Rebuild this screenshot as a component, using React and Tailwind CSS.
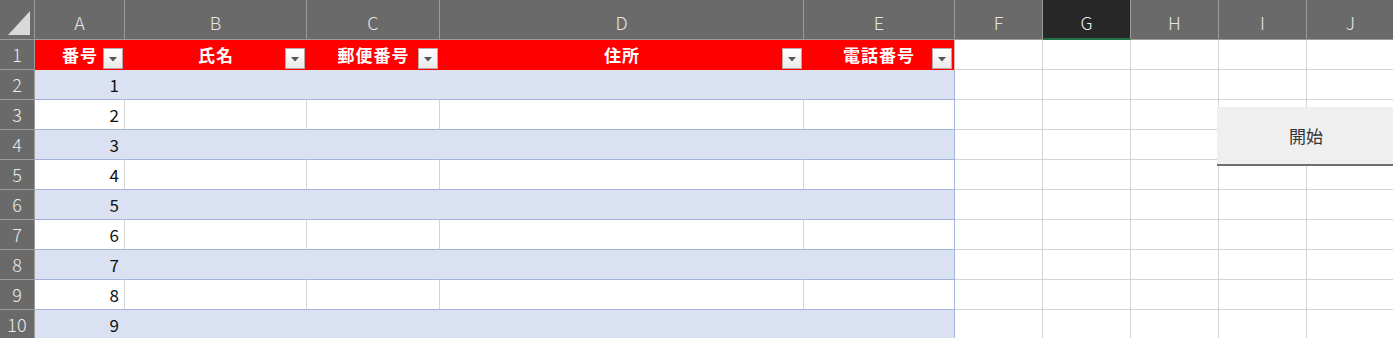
import React from "react";

const cols = [
  { l: "A", w: "w-[90px]" },
  { l: "B", w: "w-[182px]" },
  { l: "C", w: "w-[133px]" },
  { l: "D", w: "w-[364px]" },
  { l: "E", w: "w-[151px]" },
  { l: "F", w: "w-[88px]" },
  { l: "G", w: "w-[88px]" },
  { l: "H", w: "w-[88px]" },
  { l: "I", w: "w-[88px]" },
  { l: "J", w: "w-[88px]" },
];

const headers = ["番号", "氏名", "郵便番号", "住所", "電話番号"];

function FilterBtn() {
  return (
    <div className="absolute right-[2px] bottom-[1px] w-[20px] h-[21px] border border-[#b9a7a7] bg-gradient-to-b from-white to-[#e9e9e9] flex items-center justify-center">
      <svg width="8" height="5" viewBox="0 0 8 5" className="mt-[2px]">
        <path d="M0 0 L8 0 L4 4.5 Z" fill="#555" />
      </svg>
    </div>
  );
}

function RowHeader({ n }) {
  return (
    <div className="w-[35px] shrink-0 h-full bg-[#6a6a6a] border-r border-b border-[#9c9c9c] flex items-center justify-center text-[18px] font-light text-[#ececec]">
      {n}
    </div>
  );
}

function DataRow({ r }) {
  const n = r - 1;
  const blue = r % 2 === 0;
  return (
    <div className="flex h-[30px] shrink-0">
      <RowHeader n={r} />
      {cols.map((c, i) => {
        if (i < 5) {
          const last = i === 4;
          const cls = blue
            ? `bg-[#d9e1f2] border-b border-[#a3b5db] ${last ? "border-r border-r-[#a3b5db]" : "border-r border-r-[#d9e1f2]"}`
            : `bg-white border-b border-[#a3b5db] ${last ? "border-r border-r-[#a3b5db]" : "border-r border-r-[#d4d4d4]"}`;
          return (
            <div
              key={c.l}
              className={`${c.w} shrink-0 h-full ${cls} flex items-center justify-end pr-[5px] text-[17px] text-[#111] pt-[1px]`}
            >
              {i === 0 ? n : ""}
            </div>
          );
        }
        return (
          <div
            key={c.l}
            className={`${c.w} shrink-0 h-full bg-white border-r border-b border-[#d4d4d4]`}
          />
        );
      })}
    </div>
  );
}

export default function App() {
  return (
    <div
      className="relative w-[1393px] h-[338px] overflow-hidden bg-white flex flex-col"
      style={{ fontFamily: '"Noto Sans CJK JP", "Noto Sans", sans-serif' }}
    >
      {/* column headers */}
      <div className="flex h-[40px] shrink-0">
        <div className="w-[35px] shrink-0 h-full bg-[#6a6a6a] border-r border-b border-[#9c9c9c] flex items-end justify-end pr-[4px] pb-[4px]">
          <svg width="22" height="24" viewBox="0 0 22 24">
            <path d="M22 0 L22 24 L0 24 Z" fill="#d9d9d9" />
          </svg>
        </div>
        {cols.map((c) =>
          c.l === "G" ? (
            <div
              key={c.l}
              className={`${c.w} shrink-0 h-full bg-[#272727] border-r border-[#9c9c9c] border-b-2 border-b-[#217346] flex items-center justify-center pt-[6px] text-[18px] font-light text-[#f2f2f2]`}
            >
              {c.l}
            </div>
          ) : (
            <div
              key={c.l}
              className={`${c.w} shrink-0 h-full bg-[#6a6a6a] border-r border-b border-[#9c9c9c] flex items-center justify-center pt-[6px] text-[18px] font-light text-[#e6e6e6]`}
            >
              {c.l}
            </div>
          )
        )}
      </div>

      {/* row 1: table header */}
      <div className="flex h-[30px] shrink-0">
        <RowHeader n={1} />
        {cols.map((c, i) =>
          i < 5 ? (
            <div
              key={c.l}
              className={`${c.w} shrink-0 h-full relative bg-[#ff0000] ${i === 4 ? "border-r border-[#e8b5b5]" : ""} flex items-center justify-center text-[17px] font-bold text-white tracking-[1px]`}
            >
              {headers[i]}
              <FilterBtn />
            </div>
          ) : (
            <div
              key={c.l}
              className={`${c.w} shrink-0 h-full bg-white border-r border-b border-[#d4d4d4]`}
            />
          )
        )}
      </div>

      {[2, 3, 4, 5, 6, 7, 8, 9, 10].map((r) => (
        <DataRow key={r} r={r} />
      ))}

      {/* 開始 button */}
      <div className="absolute left-[1217px] top-[107px] w-[178px] h-[59px] bg-[#efefef] border-b-2 border-[#6f6f6f] flex items-center justify-center text-[17px] text-[#333]">
        開始
      </div>
    </div>
  );
}
